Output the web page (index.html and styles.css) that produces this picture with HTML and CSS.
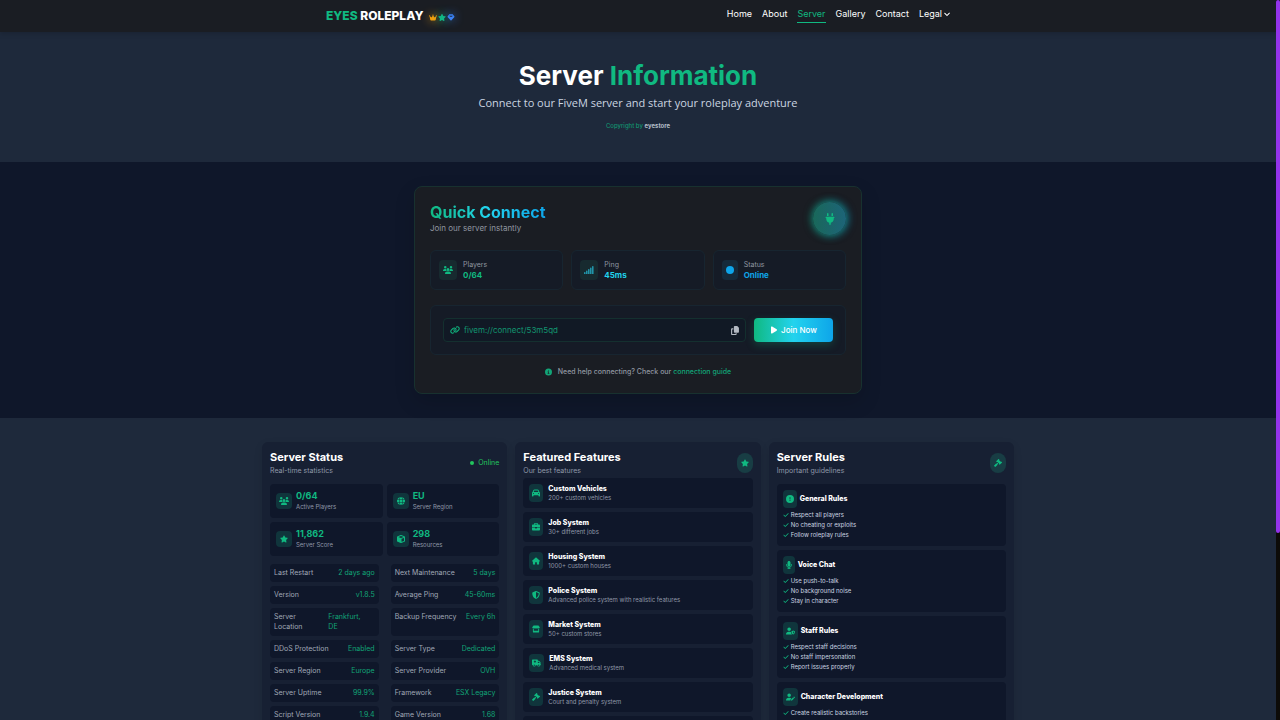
FILE: index.html
```html
<!DOCTYPE html>
<html lang="en">
<head>
  <meta charset="UTF-8" />
  <meta name="viewport" content="width=device-width, initial-scale=1" />
  <title>Server - Eyes Roleplay</title>
  <link rel="stylesheet" href="styles.css">
</head>
<body>

  <!-- Icons -->
  <svg class="sprite" aria-hidden="true">
    <symbol id="crown" viewBox="0 0 576 512"><path d="M309 106c11.4-7 19-19.7 19-34c0-22.1-17.9-40-40-40s-40 17.9-40 40c0 14.4 7.6 27 19 34L209.7 220.6c-9.1 18.2-32.7 23.4-48.6 10.7L72 160c5-6.7 8-15 8-24c0-22.1-17.9-40-40-40S0 113.9 0 136s17.9 40 40 40c.2 0 .5 0 .7 0L86.4 427.4c5.5 30.4 32 52.6 63 52.6H426.6c30.9 0 57.4-22.1 63-52.6L535.3 176c.2 0 .5 0 .7 0c22.1 0 40-17.9 40-40s-17.9-40-40-40s-40 17.9-40 40c0 9 3 17.3 8 24l-89.1 71.3c-15.9 12.7-39.5 7.5-48.6-10.7L309 106z"/></symbol>
    <symbol id="star" viewBox="0 0 576 512"><path d="M316.9 18C311.6 7 300.4 0 288.1 0s-23.4 7-28.8 18L195 150.3 51.4 171.5c-12 1.8-22 10.2-25.7 21.7s-.7 24.2 7.9 32.7L137.8 329 113.2 474.7c-2 12 3 24.2 12.9 31.3s23 8 33.8 2.3l128.3-68.5 128.3 68.5c10.8 5.7 23.9 4.9 33.8-2.3s14.9-19.3 12.9-31.3L438.5 329 542.7 225.9c8.6-8.5 11.7-21.2 7.9-32.7s-13.7-19.9-25.7-21.7L381.2 150.3 316.9 18z"/></symbol>
    <symbol id="gem" viewBox="0 0 512 512"><path d="M116.7 33.8c4.5-6.1 11.7-9.8 19.3-9.8H376c7.6 0 14.8 3.6 19.3 9.8l112 152c6.8 9.2 6.1 21.9-1.5 30.4l-232 256c-4.5 5-11 7.9-17.8 7.9s-13.2-2.9-17.8-7.9l-232-256c-7.7-8.5-8.3-21.2-1.5-30.4l112-152zm38.5 39.8c-3.3 2.5-4.2 7-2.1 10.5l57.4 95.6L63.3 192c-4.1 .3-7.3 3.8-7.3 8s3.2 7.6 7.3 8l192 16c.4 0 .9 0 1.3 0l192-16c4.1-.3 7.3-3.8 7.3-8s-3.2-7.6-7.3-8L301.5 179.8l57.4-95.6c2.1-3.5 1.2-8.1-2.1-10.5s-7.9-2-10.7 1L256 172.2 165.9 74.6c-2.8-3-7.4-3.4-10.7-1z"/></symbol>
    <symbol id="chevron" viewBox="0 0 512 512"><path stroke="currentColor" stroke-width="36" d="M233.4 406.6c12.5 12.5 32.8 12.5 45.3 0l192-192c12.5-12.5 12.5-32.8 0-45.3s-32.8-12.5-45.3 0L256 338.7 86.6 169.4c-12.5-12.5-32.8-12.5-45.3 0s-12.5 32.8 0 45.3l192 192z"/></symbol>
    <symbol id="plug" viewBox="0 0 384 512"><path d="M96 0C78.3 0 64 14.3 64 32v96h64V32c0-17.7-14.3-32-32-32zM288 0c-17.7 0-32 14.3-32 32v96h64V32c0-17.7-14.3-32-32-32zM32 160c-17.7 0-32 14.3-32 32s14.3 32 32 32v32c0 77.4 55 142 128 156.8V480c0 17.7 14.3 32 32 32s32-14.3 32-32V412.8C297 398 352 333.4 352 256V224c17.7 0 32-14.3 32-32s-14.3-32-32-32H32z"/></symbol>
    <symbol id="users" viewBox="0 0 640 512"><path d="M144 0a80 80 0 1 1 0 160A80 80 0 1 1 144 0zM512 0a80 80 0 1 1 0 160A80 80 0 1 1 512 0zM0 298.7C0 239.8 47.8 192 106.7 192h42.7c15.9 0 31 3.5 44.6 9.7c-1.3 7.2-1.9 14.7-1.9 22.3c0 38.2 16.8 72.5 43.3 96c-.2 0-.4 0-.7 0H21.3C9.6 320 0 310.4 0 298.7zM405.3 320c-.2 0-.4 0-.7 0c26.6-23.5 43.3-57.8 43.3-96c0-7.6-.7-15-1.9-22.3c13.6-6.3 28.7-9.7 44.6-9.7h42.7C592.2 192 640 239.8 640 298.7c0 11.8-9.6 21.3-21.3 21.3H405.3zM224 224a96 96 0 1 1 192 0 96 96 0 1 1 -192 0zM128 485.3C128 411.7 187.7 352 261.3 352H378.7C452.3 352 512 411.7 512 485.3c0 14.7-11.9 26.7-26.7 26.7H154.7c-14.7 0-26.7-11.9-26.7-26.7z"/></symbol>
    <symbol id="signal" viewBox="0 0 640 512"><path d="M0 416q0-32 50-32t50 32v96H0zM128 320q0-32 50-32t50 32v192h-100zM256 224q0-32 50-32t50 32v288h-100zM384 128q0-32 50-32t50 32v384h-100zM512 32q0-32 50-32t50 32v480h-100z"/></symbol>
    <symbol id="circle" viewBox="0 0 512 512"><circle cx="256" cy="256" r="256"/></symbol>
    <symbol id="link" viewBox="0 0 640 512"><path d="M579.8 267.7c56.5-56.5 56.5-148 0-204.5c-50-50-128.8-56.5-186.3-15.4l-1.6 1.1c-14.4 10.3-17.7 30.3-7.4 44.6s30.3 17.7 44.6 7.4l1.6-1.1c32.1-22.9 76-19.3 103.8 8.6c31.5 31.5 31.5 82.5 0 114L422.3 334.8c-31.5 31.5-82.5 31.5-114 0c-27.9-27.9-31.5-71.8-8.6-103.8l1.1-1.6c10.3-14.4 6.9-34.4-7.4-44.6s-34.4-6.9-44.6 7.4l-1.1 1.6C206.5 251.2 213 330 263 380c56.5 56.5 148 56.5 204.5 0L579.8 267.7zM60.2 244.3c-56.5 56.5-56.5 148 0 204.5c50 50 128.8 56.5 186.3 15.4l1.6-1.1c14.4-10.3 17.7-30.3 7.4-44.6s-30.3-17.7-44.6-7.4l-1.6 1.1c-32.1 22.9-76 19.3-103.8-8.6C74 372 74 321 105.5 289.5L217.7 177.2c31.5-31.5 82.5-31.5 114 0c27.9 27.9 31.5 71.8 8.6 103.9l-1.1 1.6c-10.3 14.4-6.9 34.4 7.4 44.6s34.4 6.9 44.6-7.4l1.1-1.6C433.5 260.8 427 182 377 132c-56.5-56.5-148-56.5-204.5 0L60.2 244.3z"/></symbol>
    <symbol id="copy" viewBox="0 0 448 512"><path d="M208 0H332.1c12.7 0 24.9 5.1 33.9 14.1l67.9 67.9c9 9 14.1 21.2 14.1 33.9V336c0 26.5-21.5 48-48 48H208c-26.5 0-48-21.5-48-48V48c0-26.5 21.5-48 48-48zM48 128h80v64H64V448H256V416h64v48c0 26.5-21.5 48-48 48H48c-26.5 0-48-21.5-48-48V176c0-26.5 21.5-48 48-48z"/></symbol>
    <symbol id="play" viewBox="0 0 384 512"><path d="M73 39c-14.8-9.1-33.4-9.4-48.5-.9S0 62.6 0 80V432c0 17.4 9.4 33.4 24.5 41.9s33.7 8.1 48.5-.9L361 297c14.3-8.7 23-24.2 23-41s-8.7-32.2-23-41L73 39z"/></symbol>
    <symbol id="info" viewBox="0 0 512 512"><path d="M256 512A256 256 0 1 0 256 0a256 256 0 1 0 0 512zM216 336h24V272H216c-13.3 0-24-10.7-24-24s10.7-24 24-24h48c13.3 0 24 10.7 24 24v88h8c13.3 0 24 10.7 24 24s-10.7 24-24 24H216c-13.3 0-24-10.7-24-24s10.7-24 24-24zm40-208a32 32 0 1 1 0 64 32 32 0 1 1 0-64z"/></symbol>
    <symbol id="alert" viewBox="0 0 512 512"><path d="M256 512A256 256 0 1 0 256 0a256 256 0 1 0 0 512zm0-384c13.3 0 24 10.7 24 24V264c0 13.3-10.7 24-24 24s-24-10.7-24-24V152c0-13.3 10.7-24 24-24zM224 352a32 32 0 1 1 64 0 32 32 0 1 1 -64 0z"/></symbol>
    <symbol id="globe" viewBox="0 0 512 512"><path d="M352 256c0 22.2-1.2 43.6-3.3 64H163.3c-2.2-20.4-3.3-41.8-3.3-64s1.2-43.6 3.3-64H348.7c2.2 20.4 3.3 41.8 3.3 64zm28.8-64H503.9c5.3 20.5 8.1 41.9 8.1 64s-2.8 43.5-8.1 64H380.8c2.1-20.6 3.2-42 3.2-64s-1.1-43.4-3.2-64zm112.6-32H376.7c-10-63.9-29.8-117.4-55.3-151.6c78.3 20.7 142 77.5 171.9 151.6zm-149.1 0H167.7c6.1-36.4 15.5-68.6 27-94.7c10.5-23.6 22.2-40.7 33.5-51.5C239.4 3.2 248.7 0 256 0s16.6 3.2 27.8 13.8c11.3 10.8 23 27.9 33.5 51.5c11.6 26 20.9 58.2 27 94.7zm-209 0H18.6C48.6 85.9 112.2 29.1 190.6 8.4C165.1 42.6 145.3 96.1 135.3 160zM8.1 192H131.2c-2.1 20.6-3.2 42-3.2 64s1.1 43.4 3.2 64H8.1C2.8 299.5 0 278.1 0 256s2.8-43.5 8.1-64zM194.7 446.6c-11.6-26-20.9-58.2-27-94.6H344.3c-6.1 36.4-15.5 68.6-27 94.6c-10.5 23.6-22.2 40.7-33.5 51.5C272.6 508.8 263.3 512 256 512s-16.6-3.2-27.8-13.8c-11.3-10.8-23-27.9-33.5-51.5zM135.3 352c10 63.9 29.8 117.4 55.3 151.6C112.2 482.9 48.6 426.1 18.6 352H135.3zm358.1 0c-30 74.1-93.6 130.9-171.9 151.6c25.5-34.2 45.2-87.7 55.3-151.6H493.4z"/></symbol>
    <symbol id="cube" viewBox="0 0 512 512"><path d="M234.5 5.7c13.9-5 29.1-5 43.1 0l192 68.6C495 83.4 512 107.5 512 134.6V377.4c0 27-17 51.2-42.5 60.3l-192 68.6c-13.9 5-29.1 5-43.1 0l-192-68.6C17 428.6 0 404.5 0 377.4V134.6c0-27 17-51.2 42.5-60.3l192-68.6zM256 66L82.3 128 256 190l173.7-62L256 66zm32 368.6l160-57.1v-188L288 246.6v188z"/></symbol>
    <symbol id="car" viewBox="0 0 512 512"><path d="M135.2 117.4L109.1 192H402.9l-26.1-74.6C372.3 104.6 360.2 96 346.6 96H165.4c-13.6 0-25.7 8.6-30.2 21.4zM39.6 196.8L74.8 96.3C88.3 57.8 124.6 32 165.4 32H346.6c40.8 0 77.1 25.8 90.6 64.3l35.2 100.5c23.2 9.6 39.6 32.5 39.6 59.2V400v48c0 17.7-14.3 32-32 32H448c-17.7 0-32-14.3-32-32V400H96v48c0 17.7-14.3 32-32 32H32c-17.7 0-32-14.3-32-32V400 256c0-26.7 16.4-49.6 39.6-59.2zM128 288a32 32 0 1 0 -64 0 32 32 0 1 0 64 0zm288 32a32 32 0 1 0 0-64 32 32 0 1 0 0 64z"/></symbol>
    <symbol id="briefcase" viewBox="0 0 512 512"><path d="M184 48H328c4.4 0 8 3.6 8 8V96H176V56c0-4.4 3.6-8 8-8zm-56 8V96H64C28.7 96 0 124.7 0 160v96H192 320 512V160c0-35.3-28.7-64-64-64H384V56c0-30.9-25.1-56-56-56H184c-30.9 0-56 25.1-56 56zM512 288H320v32c0 17.7-14.3 32-32 32H224c-17.7 0-32-14.3-32-32V288H0V416c0 35.3 28.7 64 64 64H448c35.3 0 64-28.7 64-64V288z"/></symbol>
    <symbol id="home" viewBox="0 0 576 512"><path d="M575.8 255.5c0 18-15 32.1-32 32.1h-32l.7 160.2c0 2.7-.2 5.4-.5 8.1V472c0 22.1-17.9 40-40 40H352V376c0-13.3-10.7-24-24-24H248c-13.3 0-24 10.7-24 24V512H104c-22.1 0-40-17.9-40-40V287.6H32c-18 0-32-14-32-32.1c0-9 3-17 10-24L266.4 8c7-7 15-8 22-8s15 2 21 7L564.8 231.5c8 7 12 15 11 24z"/></symbol>
    <symbol id="shield" viewBox="0 0 512 512"><path d="M256 0c4.6 0 9.2 1 13.4 2.9L457.7 82.8c22 9.3 38.4 31 38.3 57.2c-.5 99.2-41.3 280.7-213.6 363.2c-16.7 8-36.1 8-52.8 0C57.3 420.7 16.5 239.2 16 140c-.1-26.2 16.3-47.9 38.3-57.2L242.7 2.9C246.8 1 251.4 0 256 0zm0 66.8V444.8C394 378 431.1 230.1 432 141.4L256 66.8z"/></symbol>
    <symbol id="store" viewBox="0 0 576 512"><path d="M95 15Q103 0 120 0H456Q473 0 481 15L548 120C574 164 548 224 492 224C464 224 444 212 424 194C404 212 382 224 356 224C330 224 308 212 288 194C268 212 246 224 220 224C194 224 172 212 152 194C132 212 112 224 84 224C28 224 2 164 28 120zM64 252Q96 260 128 250V384H448V250Q480 260 512 252V448Q512 512 448 512H128Q64 512 64 448z"/></symbol>
    <symbol id="ambulance" viewBox="0 0 640 512"><path fill-rule="evenodd" d="M48 0H368Q416 0 416 48V96H466Q492 96 511 115L589 193Q608 212 608 237V352Q640 352 640 384T608 416H576A96 96 0 0 1 384 416H256A96 96 0 0 1 64 416H48Q0 416 0 368V48Q0 0 48 0zM416 160V256H544V237L467 160zM160 368A48 48 0 1 0 160 464A48 48 0 1 0 160 368zM480 368A48 48 0 1 0 480 464A48 48 0 1 0 480 368zM176 80V128H128V192H176V240H240V192H288V128H240V80z"/></symbol>
    <symbol id="gavel" viewBox="0 0 512 512"><path d="M318.6 9.4c-12.5-12.5-32.8-12.5-45.3 0l-120 120c-12.5 12.5-12.5 32.8 0 45.3l16 16c12.5 12.5 32.8 12.5 45.3 0l4-4L325.4 293.4l-4 4c-12.5 12.5-12.5 32.8 0 45.3l16 16c12.5 12.5 32.8 12.5 45.3 0l120-120c12.5-12.5 12.5-32.8 0-45.3l-16-16c-12.5-12.5-32.8-12.5-45.3 0l-4 4L330.6 74.6l4-4c12.5-12.5 12.5-32.8 0-45.3l-16-16zm-152 288c-12.5-12.5-32.8-12.5-45.3 0l-112 112c-12.5 12.5-12.5 32.8 0 45.3l48 48c12.5 12.5 32.8 12.5 45.3 0l112-112c12.5-12.5 12.5-32.8 0-45.3l-1.4-1.4L272 285.3 226.7 240 168 298.7l-1.4-1.4z"/></symbol>
    <symbol id="mic" viewBox="0 0 384 512"><path d="M192 0C139 0 96 43 96 96V256c0 53 43 96 96 96s96-43 96-96V96c0-53-43-96-96-96zM64 216c0-13.3-10.7-24-24-24s-24 10.7-24 24v40c0 89.1 66.2 162.7 152 174.4V464H120c-13.3 0-24 10.7-24 24s10.7 24 24 24h72 72c13.3 0 24-10.7 24-24s-10.7-24-24-24H216V430.4c85.8-11.7 152-85.3 152-174.4V216c0-13.3-10.7-24-24-24s-24 10.7-24 24v40c0 70.7-57.3 128-128 128s-128-57.3-128-128V216z"/></symbol>
    <symbol id="user-shield" viewBox="0 0 640 512"><path fill-rule="evenodd" d="M224 0a128 128 0 1 1 0 256a128 128 0 1 1 0-256zM178 304H270Q320 304 352 324C354 400 388 466 440 510Q430 512 418 512H30Q0 512 0 482C0 384 80 304 178 304zM512 224L630 270C642 274 640 286 640 296C640 370 610 464 512 512C414 464 384 370 384 296C384 286 382 274 394 270zM512 290V448C564 414 578 360 580 314z"/></symbol>
    <symbol id="user-pen" viewBox="0 0 640 512"><path d="M224 0a128 128 0 1 1 0 256a128 128 0 1 1 0-256zM178 304H270Q340 304 388 346L350 384Q338 396 334 412L318 474Q312 494 320 512H30Q0 512 0 482C0 384 80 304 178 304zM550 236Q572 214 594 236L624 266Q646 288 624 310L594 340L520 266zM497 289L571 363L442 492Q436 498 428 500L368 512Q350 516 354 496L366 436Q368 424 374 416z"/></symbol>
    <symbol id="check" viewBox="0 0 448 512"><path d="M438.6 105.4c12.5 12.5 12.5 32.8 0 45.3l-256 256c-12.5 12.5-32.8 12.5-45.3 0l-128-128c-12.5-12.5-12.5-32.8 0-45.3s32.8-12.5 45.3 0L160 338.7 393.4 105.4c12.5-12.5 32.8-12.5 45.3 0z"/></symbol>
  </svg>

  <!-- Navbar -->
  <header class="navbar">
    <div class="nav-inner">
      <a href="#" class="logo">
        <span class="logo-text"><span class="green">EYES</span> ROLEPLAY</span>
        <span class="logo-icons">
          <svg class="badge crown"><use href="#crown"/></svg>
          <svg class="badge star"><use href="#star"/></svg>
          <svg class="badge gem"><use href="#gem"/></svg>
        </span>
      </a>
      <nav class="nav-links">
        <a href="#">Home</a>
        <a href="#">About</a>
        <a href="#" class="active">Server</a>
        <a href="#">Gallery</a>
        <a href="#">Contact</a>
        <a href="#">Legal <svg class="chevron"><use href="#chevron"/></svg></a>
      </nav>
    </div>
  </header>

  <!-- Page Title -->
  <section class="hero">
    <h1>Server <span class="green">Information</span></h1>
    <p class="hero-sub">Connect to our FiveM server and start your roleplay adventure</p>
    <p class="copyright">Copyright by <b>eyestore</b></p>
  </section>

  <!-- Quick Connect -->
  <section class="quick">
    <div class="quick-card">
      <div class="quick-header">
        <div>
          <h2>Quick Connect</h2>
          <p>Join our server instantly</p>
        </div>
        <div class="plug"><svg><use href="#plug"/></svg></div>
      </div>

      <div class="quick-stats">
        <div class="quick-stat green">
          <span class="quick-icon"><svg class="w10"><use href="#users"/></svg></span>
          <div><span class="label">Players</span><strong>0/64</strong></div>
        </div>
        <div class="quick-stat cyan">
          <span class="quick-icon"><svg class="w10"><use href="#signal"/></svg></span>
          <div><span class="label">Ping</span><strong>45ms</strong></div>
        </div>
        <div class="quick-stat blue">
          <span class="quick-icon"><svg class="w8"><use href="#circle"/></svg></span>
          <div><span class="label">Status</span><strong>Online</strong></div>
        </div>
      </div>

      <div class="connect-box">
        <div class="connect-field">
          <svg class="w10"><use href="#link"/></svg>
          <input type="text" id="server-url" value="fivem://connect/53m5qd" aria-label="Server address" readonly>
          <button class="copy-button" aria-label="Copy" onclick="copyUrl()"><svg><use href="#copy"/></svg></button>
        </div>
        <button class="join-button" onclick="joinServer()"><svg><use href="#play"/></svg> Join Now</button>
      </div>

      <p class="help"><svg><use href="#info"/></svg><span>Need help connecting? Check our <a href="#">connection guide</a></span></p>
    </div>
  </section>

  <!-- Server Details -->
  <main class="columns">

    <section class="card">
      <div class="card-header">
        <div><h3>Server Status</h3><p>Real-time statistics</p></div>
        <span class="online">Online</span>
      </div>
      <div class="status-grid">
        <div class="status-item"><span class="status-icon"><svg class="w10"><use href="#users"/></svg></span><div><strong>0/64</strong><span>Active Players</span></div></div>
        <div class="status-item"><span class="status-icon"><svg class="w8"><use href="#globe"/></svg></span><div><strong>EU</strong><span>Server Region</span></div></div>
        <div class="status-item"><span class="status-icon"><svg class="w8"><use href="#star"/></svg></span><div><strong>11,862</strong><span>Server Score</span></div></div>
        <div class="status-item"><span class="status-icon"><svg class="w8"><use href="#cube"/></svg></span><div><strong>298</strong><span>Resources</span></div></div>
      </div>
      <div class="details">
        <div class="detail"><span>Last Restart</span><span class="value">2 days ago</span></div>
        <div class="detail"><span>Next Maintenance</span><span class="value">5 days</span></div>
        <div class="detail"><span>Version</span><span class="value">v1.8.5</span></div>
        <div class="detail"><span>Average Ping</span><span class="value">45-60ms</span></div>
        <div class="detail split"><span>Server<br>Location</span><span class="value">Frankfurt,<br>DE</span></div>
        <div class="detail"><span>Backup Frequency</span><span class="value">Every 6h</span></div>
        <div class="detail"><span>DDoS Protection</span><span class="value">Enabled</span></div>
        <div class="detail"><span>Server Type</span><span class="value">Dedicated</span></div>
        <div class="detail"><span>Server Region</span><span class="value">Europe</span></div>
        <div class="detail"><span>Server Provider</span><span class="value">OVH</span></div>
        <div class="detail"><span>Server Uptime</span><span class="value">99.9%</span></div>
        <div class="detail"><span>Framework</span><span class="value">ESX Legacy</span></div>
        <div class="detail"><span>Script Version</span><span class="value">1.9.4</span></div>
        <div class="detail"><span>Game Version</span><span class="value">1.68</span></div>
      </div>
    </section>

    <section class="card">
      <div class="card-header tight">
        <div><h3>Featured Features</h3><p>Our best features</p></div>
        <span class="pill"><svg class="w8"><use href="#star"/></svg></span>
      </div>
      <div class="list">
        <div class="feature"><span class="icon"><svg class="w8"><use href="#car"/></svg></span><div><h4>Custom Vehicles</h4><p>200+ custom vehicles</p></div></div>
        <div class="feature"><span class="icon"><svg class="w8"><use href="#briefcase"/></svg></span><div><h4>Job System</h4><p>30+ different jobs</p></div></div>
        <div class="feature"><span class="icon"><svg class="w8"><use href="#home"/></svg></span><div><h4>Housing System</h4><p>1000+ custom houses</p></div></div>
        <div class="feature"><span class="icon"><svg class="w8"><use href="#shield"/></svg></span><div><h4>Police System</h4><p>Advanced police system with realistic features</p></div></div>
        <div class="feature"><span class="icon"><svg class="w8"><use href="#store"/></svg></span><div><h4>Market System</h4><p>50+ custom stores</p></div></div>
        <div class="feature"><span class="icon"><svg class="w9"><use href="#ambulance"/></svg></span><div><h4>EMS System</h4><p>Advanced medical system</p></div></div>
        <div class="feature"><span class="icon"><svg class="w8"><use href="#gavel"/></svg></span><div><h4>Justice System</h4><p>Court and penalty system</p></div></div>
        <div class="feature"></div>
      </div>
    </section>

    <section class="card">
      <div class="card-header">
        <div><h3>Server Rules</h3><p>Important guidelines</p></div>
        <span class="pill"><svg class="w8"><use href="#gavel"/></svg></span>
      </div>
      <div class="list">
        <div class="rule">
          <div class="rule-header"><span class="icon"><svg class="w8"><use href="#alert"/></svg></span><h4>General Rules</h4></div>
          <ul>
            <li><svg><use href="#check"/></svg>Respect all players</li>
            <li><svg><use href="#check"/></svg>No cheating or exploits</li>
            <li><svg><use href="#check"/></svg>Follow roleplay rules</li>
          </ul>
        </div>
        <div class="rule">
          <div class="rule-header"><span class="icon"><svg class="w6"><use href="#mic"/></svg></span><h4>Voice Chat</h4></div>
          <ul>
            <li><svg><use href="#check"/></svg>Use push-to-talk</li>
            <li><svg><use href="#check"/></svg>No background noise</li>
            <li><svg><use href="#check"/></svg>Stay in character</li>
          </ul>
        </div>
        <div class="rule">
          <div class="rule-header"><span class="icon"><svg class="w9"><use href="#user-shield"/></svg></span><h4>Staff Rules</h4></div>
          <ul>
            <li><svg><use href="#check"/></svg>Respect staff decisions</li>
            <li><svg><use href="#check"/></svg>No staff impersonation</li>
            <li><svg><use href="#check"/></svg>Report issues properly</li>
          </ul>
        </div>
        <div class="rule">
          <div class="rule-header"><span class="icon"><svg class="w9"><use href="#user-pen"/></svg></span><h4>Character Development</h4></div>
          <ul>
            <li><svg><use href="#check"/></svg>Create realistic backstories</li>
          </ul>
        </div>
      </div>
    </section>

  </main>

  <!-- Scrollbar -->
  <div class="scroll-track"><div class="scroll-thumb"></div></div>

  <script>
    function copyUrl() {
      const url = document.getElementById('server-url');
      url.select();
      document.execCommand('copy');
    }

    function joinServer() {
      window.location.href = document.getElementById('server-url').value;
    }
  </script>

</body>
</html>
```
FILE: styles.css
```css
:root {
  --green: #10b981;
  --cyan: #22d3ee;
  --blue: #0ea5e9;
  --dark: #0f172a;
  --slate: #1e293b;
  --panel: #1a1d23;
  --card: #172033;
  --muted: #8f98a8;
  --gradient: linear-gradient(90deg, #10b981, #22d3ee, #0ea5e9);
}

* {
  box-sizing: border-box;
  margin: 0;
  padding: 0;
}

body {
  background: var(--slate);
  color: #fff;
  font-family: "Inter", sans-serif;
  font-size: 8px;
  line-height: 12px;
  height: 100vh;
  padding-right: 4px;
  overflow: hidden;
}

a {
  color: inherit;
  text-decoration: none;
}

button, input {
  font: inherit;
  border: none;
  background: none;
  color: inherit;
}

ul {
  list-style: none;
}

svg {
  fill: currentColor;
  display: block;
  flex-shrink: 0;
  width: 8px;
  height: 8px;
}

.sprite {
  position: absolute;
  width: 0;
  height: 0;
}

.w6 { width: 6px; }
.w8 { width: 8px; }
.w9 { width: 9px; }
.w10 { width: 10px; }

.green { color: var(--green); }
.cyan { color: var(--cyan); }
.blue { color: var(--blue); }

/* Navbar */
.navbar {
  position: relative;
  background: var(--panel);
  box-shadow: 0 2px 5px rgba(0, 0, 0, 0.15);
  margin-right: -4px;
  padding-right: 4px;
}

.nav-inner {
  max-width: 624px;
  height: 32px;
  margin: 0 auto;
  display: flex;
  align-items: center;
  justify-content: space-between;
}

.logo {
  display: flex;
  align-items: center;
  gap: 6px;
  font-size: 12px;
  font-weight: 800;
}

.logo-icons {
  display: flex;
  gap: 1px;
  padding-top: 3px;
}

.badge {
  overflow: visible;
  height: 7px;
}

.badge.crown { color: #f59e0b; filter: drop-shadow(0 0 5px #f59e0b); }
.badge.star { color: var(--green); filter: drop-shadow(0 0 5px #10b981); }
.badge.gem { color: #3b82f6; filter: drop-shadow(0 0 5px #3b82f6); }

.nav-links {
  display: flex;
  gap: 10px;
  padding-bottom: 1px;
  font-size: 9px;
}

.nav-links a {
  display: flex;
  align-items: center;
  gap: 2px;
  padding-bottom: 2px;
  border-bottom: 1px solid transparent;
}

.nav-links a.active {
  color: var(--green);
  border-color: var(--green);
}

.chevron {
  width: 6px;
  height: 6px;
}

/* Page title */
.hero {
  height: 130px;
  padding-top: 28px;
  text-align: center;
}

h1 {
  font-size: 26px;
  line-height: 32px;
  font-weight: 700;
}

.hero-sub {
  margin-top: 3px;
  font-family: "Open Sans", sans-serif;
  font-size: 11px;
  line-height: 16px;
  color: #cbd5e1;
}

.copyright {
  margin-top: 10px;
  font-size: 6px;
  font-weight: 500;
  line-height: 10px;
  color: #12936f;
}

.copyright b {
  color: #b6bfca;
}

/* Quick connect */
.quick {
  background: var(--dark);
  padding: 24px;
}

.quick-card {
  max-width: 448px;
  margin: 0 auto;
  padding: 15px;
  background: var(--panel);
  border: 1px solid #18312f;
  border-radius: 8px;
  box-shadow: 0 8px 20px rgba(0, 0, 0, 0.15);
}

.quick-header {
  display: flex;
  align-items: flex-start;
  justify-content: space-between;
  margin-bottom: 15px;
}

.quick-header h2 {
  font-size: 16px;
  line-height: 20px;
  font-weight: 700;
  background: var(--gradient);
  -webkit-background-clip: text;
  background-clip: text;
  color: transparent;
}

.quick-header p {
  color: #9096a0;
}

.plug {
  display: flex;
  align-items: center;
  justify-content: center;
  width: 33px;
  height: 33px;
  border-radius: 50%;
  color: var(--green);
  background: linear-gradient(90deg, #19685a, #1d6478);
  box-shadow: -1px 0 8px rgba(16, 185, 129, 0.6), 2px 0 8px rgba(14, 165, 233, 0.5);
}

.plug svg {
  width: 10px;
  height: 12px;
}

.quick-stats {
  display: grid;
  grid-template-columns: repeat(3, 1fr);
  gap: 8px;
  margin-bottom: 15px;
}

.quick-stat {
  display: flex;
  align-items: center;
  gap: 6px;
  height: 40px;
  padding: 8px;
  background: #151b26;
  border: 1px solid #172530;
  border-radius: 6px;
}

.quick-icon {
  display: flex;
  align-items: center;
  height: 20px;
  padding: 0 4px;
  border-radius: 4px;
  background: #172a2f;
}

.blue .quick-icon {
  background: #152a3a;
}

.cyan .quick-icon {
  color: #2193a8;
}

.quick-stat .label {
  display: block;
  font-size: 7px;
  line-height: 10px;
  color: #9096a0;
}

.quick-stat strong {
  display: block;
  font-weight: 700;
  line-height: 11px;
}

.connect-box {
  display: flex;
  align-items: center;
  gap: 8px;
  padding: 12px;
  background: #151b26;
  border: 1px solid #172530;
  border-radius: 6px;
  margin-bottom: 11px;
}

.connect-field {
  flex: 1;
  display: flex;
  align-items: center;
  gap: 4px;
  height: 24px;
  padding: 0 6px;
  background: #111925;
  border: 1px solid #14302f;
  border-radius: 4px;
  color: var(--green);
}

.connect-field input {
  flex: 1;
  min-width: 0;
  outline: none;
  color: #129570;
}

.copy-button {
  color: #b4b9c2;
  cursor: pointer;
}

.copy-button svg {
  height: 9px;
}

.join-button {
  display: flex;
  align-items: center;
  justify-content: center;
  gap: 3px;
  width: 79px;
  height: 24px;
  border-radius: 4px;
  background: var(--gradient);
  font-weight: 500;
  box-shadow: 0 3px 8px rgba(16, 185, 129, 0.25);
  cursor: pointer;
}

.help {
  display: flex;
  align-items: center;
  justify-content: center;
  gap: 6px;
  font-size: 7px;
  font-weight: 500;
  color: #9096a0;
}

.help svg,
.help a {
  color: #12a477;
}

.help svg {
  width: 7px;
}

/* Cards */
.columns {
  display: grid;
  grid-template-columns: repeat(3, 1fr);
  gap: 8px;
  max-width: 752px;
  margin: 24px auto 0;
}

.card {
  background: var(--card);
  border-radius: 6px;
  padding: 8px;
  box-shadow: 0 3px 8px rgba(0, 0, 0, 0.1);
}

.card-header {
  display: flex;
  align-items: center;
  justify-content: space-between;
  margin-bottom: 8px;
}

.card-header.tight {
  margin-bottom: 2px;
}

h3 {
  font-size: 11px;
  line-height: 14px;
  font-weight: 700;
}

.card-header p {
  padding-top: 2px;
  font-size: 7px;
  line-height: 10px;
  color: var(--muted);
}

.online {
  display: flex;
  align-items: center;
  gap: 4px;
  font-size: 7px;
  color: #22c55e;
}

.online::before {
  content: "";
  width: 4px;
  height: 4px;
  border-radius: 50%;
  background: #22c55e;
}

.pill {
  display: flex;
  align-items: center;
  height: 20px;
  padding: 0 4px;
  border-radius: 8px;
  color: var(--green);
  background: #183d44;
}

.status-grid {
  display: grid;
  grid-template-columns: 1fr 1fr;
  gap: 4px;
}

.status-item {
  display: flex;
  align-items: center;
  gap: 4px;
  height: 34px;
  padding: 0 6px;
  background: var(--dark);
  border-radius: 4px;
}

.status-icon {
  display: flex;
  align-items: center;
  justify-content: center;
  width: 16px;
  height: 16px;
  border-radius: 4px;
  color: var(--green);
  background: #10353c;
}

.status-item strong {
  display: block;
  font-size: 9px;
  font-weight: 700;
  color: var(--green);
}

.status-item div span {
  display: block;
  font-size: 6px;
  line-height: 10px;
  color: var(--muted);
}

.details {
  display: grid;
  grid-template-columns: 1fr 1fr;
  gap: 4px 12px;
  margin-top: 8px;
}

.detail {
  display: flex;
  justify-content: space-between;
  padding: 4px;
  background: var(--dark);
  border-radius: 4px;
  font-size: 7px;
  line-height: 10px;
  white-space: nowrap;
  color: #a0a8b6;
}

.detail .value {
  color: #11a577;
}

.detail.split {
  gap: 8px;
}

.detail.split span {
  flex: 1;
}

.list {
  display: grid;
  gap: 4px;
}

.icon {
  display: flex;
  align-items: center;
  height: 18px;
  padding: 0 3px;
  border-radius: 4px;
  color: var(--green);
  background: #10353c;
}

h4 {
  font-size: 7px;
  line-height: 10px;
  font-weight: 800;
}

.feature {
  display: flex;
  align-items: center;
  gap: 5px;
  height: 30px;
  padding: 0 6px;
  background: var(--dark);
  border-radius: 4px;
}

.feature p {
  font-size: 6px;
  line-height: 8px;
  color: var(--muted);
}

.rule {
  padding: 6px;
  background: var(--dark);
  border-radius: 4px;
}

.rule-header {
  display: flex;
  align-items: center;
  gap: 3px;
  margin-bottom: 2px;
}

.rule li {
  display: flex;
  align-items: center;
  gap: 2px;
  font-size: 6px;
  line-height: 10px;
  color: #cbd5e1;
}

.rule li svg {
  width: 6px;
  height: 6px;
  color: var(--green);
}

/* Scrollbar */
.scroll-track {
  position: fixed;
  top: 0;
  right: 0;
  bottom: 0;
  width: 4px;
  background: #0d0b08;
}

.scroll-thumb {
  height: 74%;
  border-radius: 2px;
  background: #9333ea;
}
```
